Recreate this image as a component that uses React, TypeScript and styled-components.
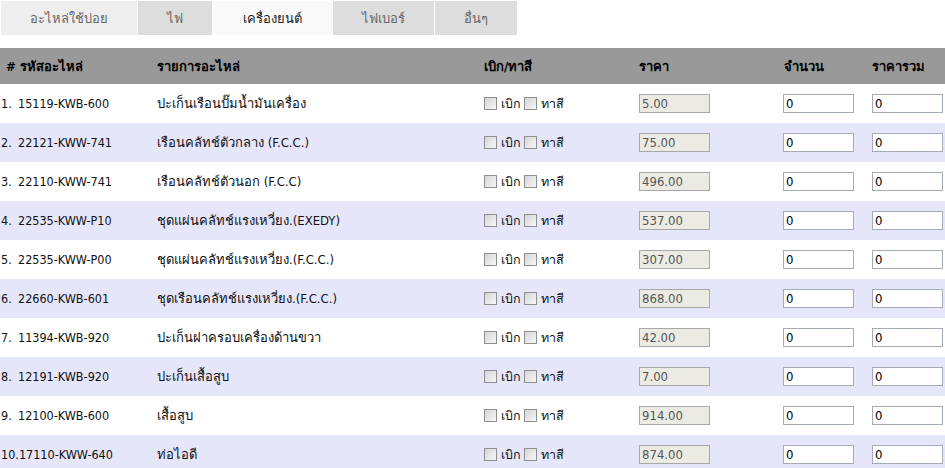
import React from "react";
import styled, { createGlobalStyle } from "styled-components";

const Global = createGlobalStyle`
  html, body { margin: 0; padding: 0; background: #ffffff; }
  body { font-family: Tahoma, "DejaVu Sans Condensed", "DejaVu Sans", "Noto Sans", sans-serif; font-size: 12px; color: #000; }
`;

const Page = styled.div`
  width: 945px;
  display: flex;
  flex-direction: column;
`;

const Tabs = styled.div`
  display: flex;
  padding: 1px 0 0 1px;
  gap: 1px;
  height: 34px;
  margin-bottom: 13px;
`;

const Tab = styled.div<{ $w: number; $active?: boolean; $first?: boolean }>`
  width: ${(p) => p.$w}px;
  display: flex;
  align-items: center;
  justify-content: center;
  background: ${(p) => (p.$active ? "#f9f9f9" : p.$first ? "#eeeeee" : "#dddddd")};
  color: ${(p) => (p.$active ? "#222" : "#666")};
  font-size: 13px;
`;

const COLS = "157px 327px 155px 144px 89px 73px";

const HeaderRow = styled.div`
  display: grid;
  grid-template-columns: ${COLS};
  height: 36px;
  align-items: center;
  background: #999999;
  font-weight: bold;
  font-size: 13px;
  color: #000;
`;

const HeadCell = styled.div<{ $pl?: number }>`
  padding-left: ${(p) => p.$pl ?? 0}px;
`;

const Row = styled.div<{ $alt: boolean }>`
  display: grid;
  grid-template-columns: ${COLS};
  height: 39px;
  align-items: center;
  background: ${(p) => (p.$alt ? "#e6e6fa" : "#ffffff")};
  font-size: 13px;
  color: #111;
`;

const CodeCell = styled.div`
  padding-left: 1px;
  white-space: nowrap;
  font-size: 12.5px;
`;

const Num = styled.span`
  display: inline-block;
  min-width: 17px;
`;

const Cell = styled.div`
  white-space: nowrap;
`;

const Checks = styled.div`
  display: flex;
  align-items: center;
  font-size: 12.5px;
`;

const Box = styled.span`
  width: 11px;
  height: 11px;
  border: 1px solid #8f8f8f;
  background: linear-gradient(135deg, #d6d6d6, #f6f6f6);
  display: inline-block;
  margin-right: 4px;
`;

const CheckLabel = styled.span`
  margin-right: 3px;
`;

const Input = styled.div<{ $disabled?: boolean }>`
  width: 67px;
  height: 17px;
  border: 1px solid ${(p) => (p.$disabled ? "#a8a8a8" : "#a5acb5")};
  background: ${(p) => (p.$disabled ? "#ebebe4" : "#ffffff")};
  color: ${(p) => (p.$disabled ? "#555" : "#000")};
  padding: 0 0 0 2px;
  font-size: 13px;
  line-height: 17px;
  box-sizing: content-box;
`;

const rows = [
  ["15119-KWB-600", "ปะเก็นเรือนปั๊มน้ำมันเครื่อง", "5.00"],
  ["22121-KWW-741", "เรือนคลัทช์ตัวกลาง (F.C.C.)", "75.00"],
  ["22110-KWW-741", "เรือนคลัทช์ตัวนอก (F.C.C)", "496.00"],
  ["22535-KWW-P10", "ชุดแผ่นคลัทช์แรงเหวี่ยง.(EXEDY)", "537.00"],
  ["22535-KWW-P00", "ชุดแผ่นคลัทช์แรงเหวี่ยง.(F.C.C.)", "307.00"],
  ["22660-KWB-601", "ชุดเรือนคลัทช์แรงเหวี่ยง.(F.C.C.)", "868.00"],
  ["11394-KWB-920", "ปะเก็นฝาครอบเครื่องด้านขวา", "42.00"],
  ["12191-KWB-920", "ปะเก็นเสื้อสูบ", "7.00"],
  ["12100-KWB-600", "เสื้อสูบ", "914.00"],
  ["17110-KWW-640", "ท่อไอดี", "874.00"],
];

const tabs: { label: string; w: number; active?: boolean; first?: boolean }[] = [
  { label: "อะไหล่ใช้บ่อย", w: 136, first: true },
  { label: "ไฟ", w: 74 },
  { label: "เครื่องยนต์", w: 119, active: true },
  { label: "ไฟเบอร์", w: 101 },
  { label: "อื่นๆ", w: 82 },
];

export default function App() {
  return (
    <Page>
      <Global />
      <Tabs>
        {tabs.map((t) => (
          <Tab key={t.label} $w={t.w} $active={t.active} $first={t.first}>
            {t.label}
          </Tab>
        ))}
      </Tabs>
      <HeaderRow>
        <HeadCell $pl={6}># รหัสอะไหล่</HeadCell>
        <HeadCell>รายการอะไหล่</HeadCell>
        <HeadCell>เบิก/ทาสี</HeadCell>
        <HeadCell>ราคา</HeadCell>
        <HeadCell $pl={1}>จำนวน</HeadCell>
        <HeadCell>ราคารวม</HeadCell>
      </HeaderRow>
      {rows.map(([code, name, price], i) => (
        <Row key={code} $alt={i % 2 === 1}>
          <CodeCell>
            <Num>{i + 1}.</Num>
            {code}
          </CodeCell>
          <Cell>{name}</Cell>
          <Checks>
            <Box />
            <CheckLabel>เบิก</CheckLabel>
            <Box />
            <CheckLabel>ทาสี</CheckLabel>
          </Checks>
          <Input $disabled>{price}</Input>
          <Input>0</Input>
          <Input>0</Input>
        </Row>
      ))}
    </Page>
  );
}
